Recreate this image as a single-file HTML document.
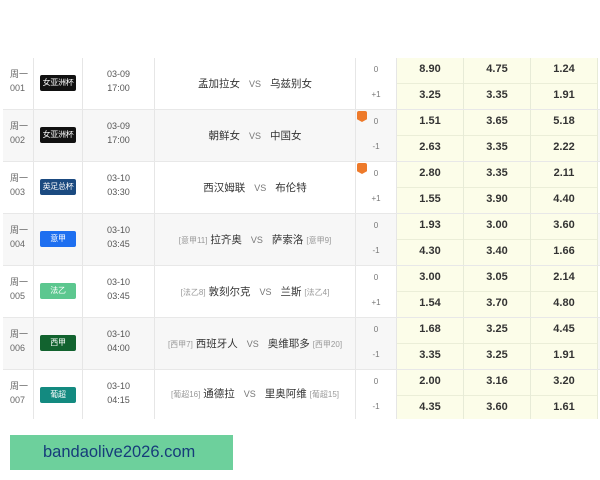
<!DOCTYPE html>
<html><head><meta charset="utf-8"><style>
*{margin:0;padding:0;box-sizing:border-box}
body{width:600px;height:480px;background:#fff;position:relative;overflow:hidden;font-family:"Liberation Sans","Noto Sans CJK SC",sans-serif;}
.row{position:absolute;left:3px;width:597px;height:52px;border-bottom:1px solid #e8e8e8;}
.c{position:absolute;top:0;height:100%;border-right:1px solid #e6e6e6;}
.wk{left:0;width:31px;font-size:9px;color:#666;line-height:14px;padding:9px 0 0 7px;}
.bd{left:31px;width:49px;}
.bd span{position:absolute;left:6px;top:17px;width:36px;height:16px;border-radius:2px;color:#fff;font-size:8px;line-height:16px;text-align:center;letter-spacing:-0.3px;white-space:nowrap;overflow:hidden;}
.tm{left:80px;width:72px;font-size:9px;color:#555;line-height:14px;text-align:center;padding-top:9px;}
.mt{left:152px;width:201px;text-align:center;font-size:10.5px;color:#333;line-height:52px;white-space:nowrap;}
.mt i{font-style:normal;color:#999;font-size:8px;}
.mt b{font-weight:normal;color:#777;font-size:9px;margin:0 9px;}
.hc{left:353px;width:41px;font-size:8px;color:#777;}
.hc p{position:absolute;left:0;width:40px;text-align:center;}
.od{left:394px;width:67px;background:#fcfde9;border-right:1px solid #e7ebd7;}
.od p{position:absolute;left:0;width:100%;text-align:center;font-size:11px;font-weight:bold;color:#333;}
.od hr{position:absolute;left:0;top:25px;width:100%;border:0;border-top:1px solid #ebeed8;}
.flag{position:absolute;left:357px;width:10px;height:11px;background:#ee7a2a;border-radius:2px 2px 3px 3px;clip-path:polygon(0 0,100% 0,100% 75%,50% 100%,0 75%);}
.foot{position:absolute;left:10px;top:435px;width:223px;height:35px;background:#6dd09c;color:#163c7a;font-size:16.5px;line-height:35px;padding-left:33px;}
</style></head><body>
<div style="position:absolute;left:3px;top:58px;width:1px;height:361px;background:#e6e6e6"></div>

<div class="row" style="top:58px;background:#fff">
<div class="c wk">周一<br>001</div><div class="c bd"><span style="background:#111">女亚洲杯</span></div>
<div class="c tm">03-09<br>17:00</div><div class="c mt">孟加拉女<b>VS</b>乌兹别女</div>
<div class="c hc"><p style="top:7px">0</p><p style="top:32px">+1</p></div>
<div class="c od" style="left:394px"><p style="top:5px">8.90</p><hr><p style="top:31px">3.25</p></div>
<div class="c od" style="left:461px"><p style="top:5px">4.75</p><hr><p style="top:31px">3.35</p></div>
<div class="c od" style="left:528px"><p style="top:5px">1.24</p><hr><p style="top:31px">1.91</p></div></div>

<div class="row" style="top:110px;background:#f7f7f7">
<div class="c wk">周一<br>002</div><div class="c bd"><span style="background:#111">女亚洲杯</span></div>
<div class="c tm">03-09<br>17:00</div><div class="c mt">朝鲜女<b>VS</b>中国女</div>
<div class="c hc"><p style="top:7px">0</p><p style="top:32px">-1</p></div>
<div class="c od" style="left:394px"><p style="top:5px">1.51</p><hr><p style="top:31px">2.63</p></div>
<div class="c od" style="left:461px"><p style="top:5px">3.65</p><hr><p style="top:31px">3.35</p></div>
<div class="c od" style="left:528px"><p style="top:5px">5.18</p><hr><p style="top:31px">2.22</p></div></div>
<div class="flag" style="top:111px"></div>

<div class="row" style="top:162px;background:#fff">
<div class="c wk">周一<br>003</div><div class="c bd"><span style="background:#1b4a80">英足总杯</span></div>
<div class="c tm">03-10<br>03:30</div><div class="c mt">西汉姆联<b>VS</b>布伦特</div>
<div class="c hc"><p style="top:7px">0</p><p style="top:32px">+1</p></div>
<div class="c od" style="left:394px"><p style="top:5px">2.80</p><hr><p style="top:31px">1.55</p></div>
<div class="c od" style="left:461px"><p style="top:5px">3.35</p><hr><p style="top:31px">3.90</p></div>
<div class="c od" style="left:528px"><p style="top:5px">2.11</p><hr><p style="top:31px">4.40</p></div></div>
<div class="flag" style="top:163px"></div>

<div class="row" style="top:214px;background:#f7f7f7">
<div class="c wk">周一<br>004</div><div class="c bd"><span style="background:#1e6ff0">意甲</span></div>
<div class="c tm">03-10<br>03:45</div><div class="c mt"><i>[意甲11]</i> 拉齐奥<b>VS</b>萨索洛 <i>[意甲9]</i></div>
<div class="c hc"><p style="top:7px">0</p><p style="top:32px">-1</p></div>
<div class="c od" style="left:394px"><p style="top:5px">1.93</p><hr><p style="top:31px">4.30</p></div>
<div class="c od" style="left:461px"><p style="top:5px">3.00</p><hr><p style="top:31px">3.40</p></div>
<div class="c od" style="left:528px"><p style="top:5px">3.60</p><hr><p style="top:31px">1.66</p></div></div>

<div class="row" style="top:266px;background:#fff">
<div class="c wk">周一<br>005</div><div class="c bd"><span style="background:#5cc78f">法乙</span></div>
<div class="c tm">03-10<br>03:45</div><div class="c mt"><i>[法乙8]</i> 敦刻尔克<b>VS</b>兰斯 <i>[法乙4]</i></div>
<div class="c hc"><p style="top:7px">0</p><p style="top:32px">+1</p></div>
<div class="c od" style="left:394px"><p style="top:5px">3.00</p><hr><p style="top:31px">1.54</p></div>
<div class="c od" style="left:461px"><p style="top:5px">3.05</p><hr><p style="top:31px">3.70</p></div>
<div class="c od" style="left:528px"><p style="top:5px">2.14</p><hr><p style="top:31px">4.80</p></div></div>

<div class="row" style="top:318px;background:#f7f7f7">
<div class="c wk">周一<br>006</div><div class="c bd"><span style="background:#12632f">西甲</span></div>
<div class="c tm">03-10<br>04:00</div><div class="c mt"><i>[西甲7]</i> 西班牙人<b>VS</b>奥维耶多 <i>[西甲20]</i></div>
<div class="c hc"><p style="top:7px">0</p><p style="top:32px">-1</p></div>
<div class="c od" style="left:394px"><p style="top:5px">1.68</p><hr><p style="top:31px">3.35</p></div>
<div class="c od" style="left:461px"><p style="top:5px">3.25</p><hr><p style="top:31px">3.25</p></div>
<div class="c od" style="left:528px"><p style="top:5px">4.45</p><hr><p style="top:31px">1.91</p></div></div>

<div class="row" style="top:370px;background:#fff;height:49px;border-bottom:0">
<div class="c wk">周一<br>007</div><div class="c bd"><span style="background:#138a80">葡超</span></div>
<div class="c tm">03-10<br>04:15</div><div class="c mt" style="line-height:49px"><i>[葡超16]</i> 通德拉<b>VS</b>里奥阿维 <i>[葡超15]</i></div>
<div class="c hc"><p style="top:7px">0</p><p style="top:32px">-1</p></div>
<div class="c od" style="left:394px"><p style="top:5px">2.00</p><hr><p style="top:31px">4.35</p></div>
<div class="c od" style="left:461px"><p style="top:5px">3.16</p><hr><p style="top:31px">3.60</p></div>
<div class="c od" style="left:528px"><p style="top:5px">3.20</p><hr><p style="top:31px">1.61</p></div></div>

<div class="foot">bandaolive2026.com</div>
</body></html>
